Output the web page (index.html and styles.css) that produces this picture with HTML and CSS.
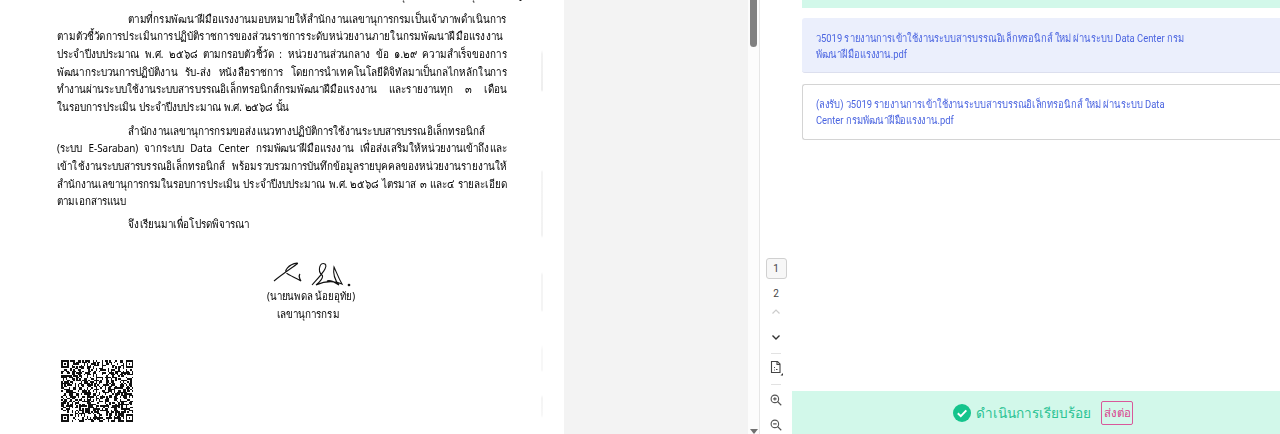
FILE: index.html
```html
<!DOCTYPE html>
<html lang="th">
<head>
    <meta charset="UTF-8">
    <meta name="viewport" content="width=device-width, initial-scale=1.0">
    <title>เอกสาร</title>
    <link rel="stylesheet" href="styles.css">
</head>
<body>
    <div class="viewer">
        <div class="pdf-area">
            <div class="page">
                <div class="doc">
                    <div class="cut-line">ที่ รง ๐๕๐๑/ว ๕๐๑๙ กรมพัฒนาฝีมือแรงงาน ถนนมิตรไมตรี เขตดินแดง กรุงเทพฯ ๑๐๔๐๐ ตุลาคม ๒๕๖๘</div>
                    <p class="para">
                        <span class="line first">ตามที่กรมพัฒนาฝีมือแรงงานมอบหมายให้สำนักงานเลขานุการกรมเป็นเจ้าภาพดำเนินการ</span>
                        <span class="line stretch">ตามตัวชี้วัดการประเมินการปฏิบัติราชการของส่วนราชการระดับหน่วยงานภายในกรมพัฒนาฝีมือแรงงาน</span>
                        <span class="line">ประจำปีงบประมาณ พ.ศ. ๒๕๖๘ ตามกรอบตัวชี้วัด : หน่วยงานส่วนกลาง ข้อ ๑.๒๙ ความสำเร็จของการ</span>
                        <span class="line">พัฒนากระบวนการปฏิบัติงาน รับ-ส่ง หนังสือราชการ โดยการนำเทคโนโลยีดิจิทัลมาเป็นกลไกหลักในการ</span>
                        <span class="line">ทำงานผ่านระบบใช้งานระบบสารบรรณอิเล็กทรอนิกส์กรมพัฒนาฝีมือแรงงาน และรายงานทุก ๓ เดือน</span>
                        <span class="line last">ในรอบการประเมิน ประจำปีงบประมาณ พ.ศ. ๒๕๖๘ นั้น</span>
                    </p>
                    <p class="para">
                        <span class="line first">สำนักงานเลขานุการกรมขอส่งแนวทางปฏิบัติการใช้งานระบบสารบรรณอิเล็กทรอนิกส์</span>
                        <span class="line">(ระบบ E-Saraban) จากระบบ Data Center กรมพัฒนาฝีมือแรงงาน เพื่อส่งเสริมให้หน่วยงานเข้าถึงและ</span>
                        <span class="line">เข้าใช้งานระบบสารบรรณอิเล็กทรอนิกส์ พร้อมรวบรวมการบันทึกข้อมูลรายบุคคลของหน่วยงานรายงานให้</span>
                        <span class="line">สำนักงานเลขานุการกรมในรอบการประเมิน ประจำปีงบประมาณ พ.ศ. ๒๕๖๘ ไตรมาส ๓ และ๔ รายละเอียด</span>
                        <span class="line last">ตามเอกสารแนบ</span>
                    </p>
                    <p class="para">
                        <span class="line first last">จึงเรียนมาเพื่อโปรดพิจารณา</span>
                    </p>
                    <div class="sign">
                        <svg class="signature" width="90" height="28" viewBox="0 0 90 28" fill="none" stroke="#111" stroke-width="1.100">
                            <path d="M1 20 C8 14 20 6 24 3 C27 1 17 2 13 9 C11 13 20 15 28 20 C26 17 26 14 27 13"/>
                            <path d="M39 24 C46 16 56 6 52 3 C47 0 44 10 49 14 C51 16 47 21 43 24 C52 20 60 19 69 23 C65 16 63 10 61 6 C60 12 61 18 66 24 C60 20 56 19 54 20"/>
                            <circle cx="76" cy="24" r="0.8" fill="#111"/>
                        </svg>
                        <div class="sign-name">(นายนพดล น้อยอุทัย)</div>
                        <div class="sign-role">เลขานุการกรม</div>
                    </div>
                    <svg class="qr" id="qr" width="72" height="62" viewBox="0 0 48 41" shape-rendering="crispEdges"></svg>
                </div>
                <div class="scan-mark"></div>
            </div>
            <div class="pdf-gap"></div>
            <div class="scroll-track">
                <div class="scroll-thumb"></div>
                <div class="scroll-arrow"></div>
            </div>
        </div>

        <div class="toolbar">
            <div class="page-num current">1</div>
            <div class="page-num">2</div>
            <svg class="tool faint" width="14" height="14" viewBox="0 0 14 14" fill="none" stroke="#ccc" stroke-width="1.2"><path d="M3.5 8.5 7 5l3.500 3.500"/></svg>
            <svg class="tool" width="14" height="14" viewBox="0 0 14 14" fill="none" stroke="#333" stroke-width="1.4"><path d="M3.500 5.500 7 9l3.500-3.500"/></svg>
            <div class="tool-sep"></div>
            <svg class="tool doc-tool" width="16" height="16" viewBox="0 0 16 16" fill="none" stroke="#444" stroke-width="1.100">
                <path d="M3.500 1.500h6l2.500 2.500v8.500h-8.500z"/>
                <path d="M9 1.500v3h3M6 7.500h1M8 9.500h1.500M6 10h.8"/>
                <path d="M15 13v2.500h-2.500z" fill="#333" stroke="none"/>
            </svg>
            <div class="tool-sep wide-gap"></div>
            <svg class="tool zoom-tool" width="12" height="12" viewBox="0 0 16 16" fill="none" stroke="#555" stroke-width="1.500">
                <circle cx="6.500" cy="6.500" r="5"/><path d="M10 10l5 5M4.200 6.500h4.600M6.500 4.200v4.600"/>
            </svg>
            <svg class="tool last-tool" width="12" height="12" viewBox="0 0 16 16" fill="none" stroke="#555" stroke-width="1.500">
                <circle cx="6.500" cy="6.500" r="5"/><path d="M10 10l5 5M4.200 6.500h4.600"/>
            </svg>
        </div>

        <div class="panel">
            <div class="files">
                <div class="top-strip"></div>
                <div class="file-card active">
                    <a class="file-link">ว5019 รายงานการเข้าใช้งานระบบสารบรรณอิเล็กทรอนิกส์ ใหม่ ผ่านระบบ Data Center กรม</a>
                    <a class="file-link">พัฒนาฝีมือแรงงาน.pdf</a>
                </div>
                <div class="file-card">
                    <a class="file-link">(ลงรับ) ว5019 รายงานการเข้าใช้งานระบบสารบรรณอิเล็กทรอนิกส์ ใหม่ ผ่านระบบ Data</a>
                    <a class="file-link">Center กรมพัฒนาฝีมือแรงงาน.pdf</a>
                </div>
            </div>
            <div class="status-bar">
                <svg class="status-icon" width="18" height="18" viewBox="0 0 18 18">
                    <circle cx="9" cy="9" r="9" fill="#14c48c"/>
                    <path d="M4.800 9.300 7.800 12.200 13.300 6.400" fill="none" stroke="#fff" stroke-width="2"/>
                </svg>
                <span class="status-text">ดำเนินการเรียบร้อย</span>
                <button class="forward-btn">ส่งต่อ</button>
            </div>
        </div>
    </div>
    <script src="qr.js"></script>
</body>
</html>
```

FILE: styles.css
```css
html, body {
    margin: 0;
    padding: 0;
    height: 100%;
    overflow: hidden;
    background-color: #fff;
    font-family: "Noto Sans", "Open Sans", sans-serif;
}

.viewer {
    display: grid;
    grid-template-columns: 760px 32px 1fr;
    height: 434px;
    overflow: hidden;
}

/* PDF side */
.pdf-area {
    display: flex;
    height: 434px;
    border-right: 1px solid #e6e6e6;
    box-sizing: border-box;
    overflow: hidden;
}

.page {
    position: relative;
    width: 564px;
    flex: none;
    background-color: #fff;
    overflow: hidden;
}

.doc {
    padding-left: 57px;
    width: 450px;
    color: #000;
    font-size: 11.500px;
    line-height: 17.6px;
    filter: blur(0.3px);
}

.cut-line {
    margin-top: -13px;
    height: 17.6px;
    white-space: nowrap;
    padding-left: 40px;
    transform: scaleX(0.86);
    transform-origin: left;
}

/* the scan has a narrow typeface, so the lines are squeezed to its width */
.para {
    width: 523px;
    margin: 0 0 4.800px;
    transform: scaleX(0.86);
    transform-origin: left top;
}

.para:first-of-type {
    margin-bottom: 6.400px;
    padding-top: 5.200px;
}

.line {
    display: block;
    white-space: nowrap;
    text-align: justify;
    text-align-last: justify;
}

.line.first {
    padding-left: 83px;
}

.line.last {
    text-align-last: left;
}

/* one long word, no spaces for justify to open up */
.line.stretch {
    letter-spacing: 0.190px;
}

.sign {
    margin: 29px 0 0 150px;
    width: 208px;
    text-align: center;
}

.signature {
    display: block;
    margin: 0 auto -2px 66px;
}

.sign-name {
    transform: scaleX(0.84);
}

.sign-role {
    margin: 0.400px 6px 0 0;
    transform: scaleX(0.86);
}

.qr {
    display: block;
    margin: 37px 0 0 4px;
    filter: blur(0.4px);
}

.scan-mark {
    position: absolute;
    left: 541px;
    top: 0;
    width: 2px;
    height: 434px;
    background: linear-gradient(to bottom,
        transparent 50px, #f2f2f2 54px, #eeeeee 90px, transparent 92px,
        transparent 170px, #f4f4f4 172px, #f2f2f2 235px, transparent 238px,
        transparent 272px, #f4f4f4 275px, #f4f4f4 310px, transparent 312px,
        transparent 345px, #f7f7f7 350px, #f7f7f7 370px, transparent 372px,
        transparent 395px, #f4f4f4 398px, #f7f7f7 415px, transparent 418px);
}

.pdf-gap {
    width: 184px;
    flex: none;
    background-color: #f3f3f3;
}

.scroll-track {
    position: relative;
    flex: 1;
    background-color: #fcfcfc;
}

.scroll-thumb {
    width: 7px;
    height: 47px;
    margin-left: 2px;
    background-color: #808080;
    border-radius: 0 0 4px 4px;
}

.scroll-arrow {
    position: absolute;
    left: 2px;
    bottom: 0;
    width: 0;
    height: 0;
    border-left: 4px solid transparent;
    border-right: 4px solid transparent;
    border-top: 5px solid #707070;
}

/* Page tools */
.toolbar {
    display: flex;
    flex-direction: column;
    align-items: center;
    justify-content: flex-end;
    height: 434px;
    padding-bottom: 3px;
    box-sizing: border-box;
}

.page-num {
    width: 19px;
    height: 19px;
    margin-bottom: 2px;
    line-height: 19px;
    text-align: center;
    font-family: "Roboto", sans-serif;
    font-size: 10px;
    color: #444;
}

.page-num.current {
    margin-bottom: 5px;
    background-color: #f7f7f7;
    border: 1px solid #d0d0d0;
    border-radius: 3px;
}

.tool {
    display: block;
    margin-bottom: 9px;
}

.tool.faint {
    margin-bottom: 11px;
}

.tool.doc-tool {
    margin-bottom: 8px;
}

.tool.zoom-tool {
    margin-bottom: 13px;
}

.tool.last-tool {
    margin-bottom: 0;
}

.tool-sep {
    width: 10px;
    height: 1px;
    margin-bottom: 6px;
    background-color: #e2e2e2;
}

.tool-sep.wide-gap {
    margin-bottom: 9px;
}

/* Attachments */
.panel {
    display: flex;
    flex-direction: column;
    justify-content: space-between;
    height: 434px;
    overflow: hidden;
}

.files {
    padding-left: 10px;
}

.top-strip {
    height: 8px;
    margin-bottom: 10px;
    background-color: #d2f8ea;
}

.file-card {
    height: 56px;
    margin-bottom: 11px;
    padding: 12px 0 0 13px;
    box-sizing: border-box;
    background-color: #fff;
    border: 1px solid #d4d4d4;
    border-right: 0;
    border-radius: 3px 0 0 3px;
    font-family: "Roboto", "Noto Sans", sans-serif;
    font-size: 11.200px;
    line-height: 16px;
}

.file-card.active {
    height: 55px;
    padding: 13px 0 0 14px;
    background-color: #ebeffc;
    border: 0;
    border-bottom: 1px solid #dcdfee;
}

.file-link {
    display: block;
    white-space: nowrap;
    color: #4a64e0;
    transform: scaleX(0.84);
    transform-origin: left;
}

.status-bar {
    display: flex;
    align-items: center;
    justify-content: center;
    height: 43px;
    padding-left: 14px;
    background-color: #d2f8ea;
}

.status-icon {
    flex: none;
}

.status-text {
    margin: 0 10px 0 5px;
    font-size: 13.600px;
    font-weight: 500;
    color: #2bc394;
}

.forward-btn {
    width: 32px;
    height: 24px;
    padding: 0;
    background: transparent;
    border: 1px solid #d9589a;
    border-radius: 2px;
    font-family: "Noto Sans", sans-serif;
    font-size: 11.500px;
    color: #d9408c;
}
```

FILE: qr.js
```js
// QR code pattern for the scanned page, fixed seed so it comes out the same each load
const svg = document.getElementById("qr");
const COLS = 48;
const ROWS = 41;
let seed = 5019;

function nextBit() {
    seed = (seed * 1103515245 + 12345) & 0x7fffffff;
    return (seed >> 16) & 1;
}

function inFinder(x, y) {
    return (x < 6 || x >= COLS - 6) && (y < 6 || y >= ROWS - 6);
}

let path = "";
for (let y = 0; y < ROWS; y++) {
    for (let x = 0; x < COLS; x++) {
        if (!inFinder(x, y) && nextBit()) {
            path += `M${x} ${y}h1v1h-1z`;
        }
    }
}

[[0, 0], [COLS - 5, 0], [0, ROWS - 5], [COLS - 5, ROWS - 5]].forEach(([x, y]) => {
    path += `M${x} ${y}h5v5h-5zM${x + 1} ${y + 1}v3h3v-3zM${x + 2} ${y + 2}h1v1h-1z`;
});

// dark mark in the middle of the code
path += "M21 22h2v2h2v-4h2v2h1v2h-2v2h-3v-2h-2z";

const shape = document.createElementNS("http://www.w3.org/2000/svg", "path");
shape.setAttribute("d", path);
shape.setAttribute("fill", "#111");
shape.setAttribute("fill-rule", "evenodd");
svg.appendChild(shape);
```
